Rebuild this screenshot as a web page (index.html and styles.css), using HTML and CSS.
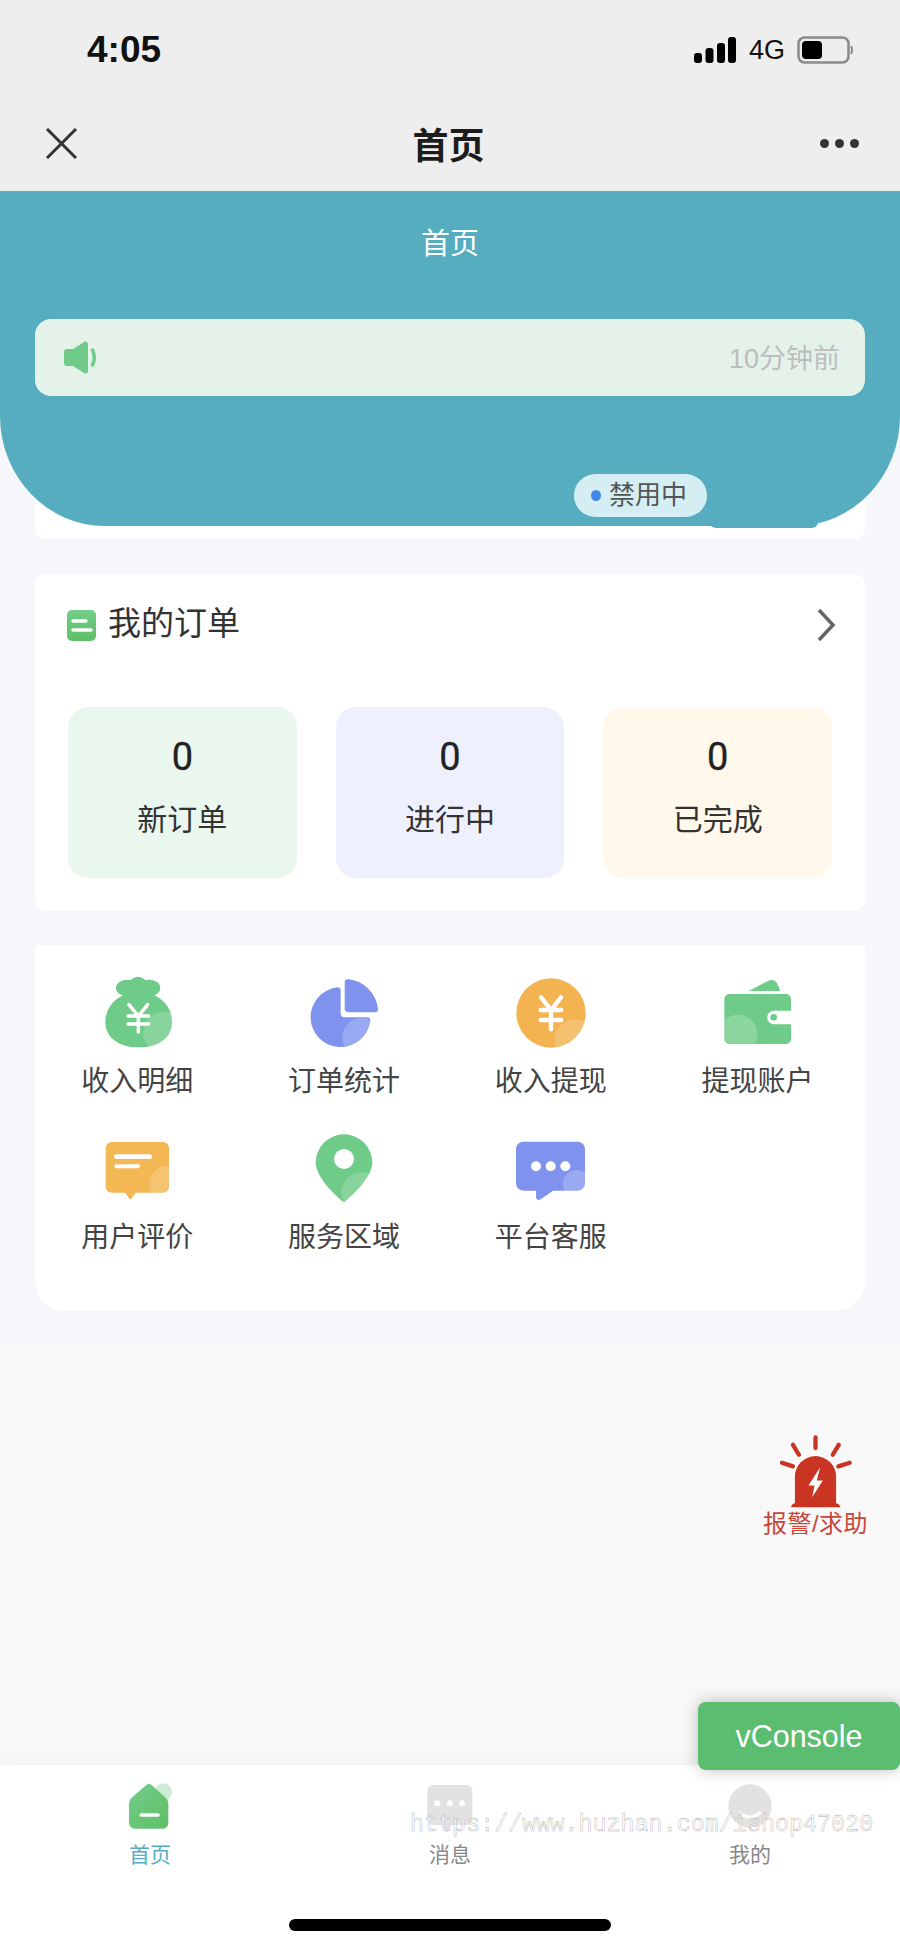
FILE: index.html
```html
<!DOCTYPE html>
<html lang="zh-CN">
<head>
    <meta charset="UTF-8">
    <meta name="viewport" content="width=device-width, initial-scale=1.0">
    <title>首页</title>
    <link rel="stylesheet" href="styles.css">
</head>
<body>
    <header class="topbar">
        <div class="status">
            <span class="time">4:05</span>
            <div class="status-icons">
                <svg class="signal" viewBox="0 0 42 26" width="42" height="26">
                    <rect x="0" y="16" width="8" height="10" rx="3"/>
                    <rect x="11.500" y="11" width="8" height="15" rx="3"/>
                    <rect x="23" y="6" width="8" height="20" rx="3"/>
                    <rect x="34" y="0" width="8" height="26" rx="3"/>
                </svg>
                <span class="network">4G</span>
                <svg class="battery" viewBox="0 0 56 28" width="56" height="28">
                    <rect x="1.500" y="1.500" width="50" height="25" rx="6" fill="none" stroke="#8a8a8a" stroke-width="2.500"/>
                    <rect x="5" y="5" width="20" height="18" rx="4" fill="#000"/>
                    <path d="M54 10 Q56 14 54 18" fill="none" stroke="#8a8a8a" stroke-width="2"/>
                </svg>
            </div>
        </div>
        <nav class="nav">
            <svg viewBox="0 0 31 31" width="31" height="31">
                <path d="M1 1 L30 30 M30 1 L1 30" stroke="#333" stroke-width="3" fill="none"/>
            </svg>
            <span class="nav-title">首页</span>
            <div class="more"><i></i><i></i><i></i></div>
        </nav>
    </header>

    <main class="content">
        <section class="panel">
            <div class="hero">
                <div class="hero-title">首页</div>
                <div class="notice">
                    <svg viewBox="0 0 33 33" width="33" height="33">
                        <path d="M3 8 H9 L21 0.500 Q24 0 24 3 V30 Q24 33 21 32.500 L9 25 H3 Q0 25 0 22 V11 Q0 8 3 8 Z" fill="#6fcb88"/>
                        <path d="M28.500 9 Q32 16.500 28.500 24" fill="none" stroke="#6fcb88" stroke-width="3.500" stroke-linecap="round"/>
                    </svg>
                    <span class="notice-time">10分钟前</span>
                </div>
                <div class="hero-nub"></div>
                <div class="badge"><i class="badge-dot"></i><span class="badge-text">禁用中</span></div>
            </div>
            <div class="profile-card"></div>

            <div class="card order-card">
                <div class="order-head">
                    <div class="order-title">
                        <svg class="order-icon" viewBox="0 0 29 31" width="29" height="31">
                            <defs>
                                <linearGradient id="titleGreen" x1="0" y1="0" x2="0" y2="1">
                                    <stop offset="0" stop-color="#72cc8a"/>
                                    <stop offset="1" stop-color="#5fc065"/>
                                </linearGradient>
                            </defs>
                            <rect width="29" height="31" rx="5" fill="url(#titleGreen)"/>
                            <path d="M6 11 H19 M6 20 H24" stroke="#fff" stroke-width="3.500" stroke-linecap="round"/>
                        </svg>
                        <span>我的订单</span>
                    </div>
                    <svg class="order-arrow" viewBox="0 0 20 34" width="20" height="34">
                        <path d="M3 2 L17 17 L3 32" fill="none" stroke="#666" stroke-width="3.500"/>
                    </svg>
                </div>
                <div class="tiles">
                    <div class="tile tile-green"><div class="tile-num">0</div><div class="tile-label">新订单</div></div>
                    <div class="tile tile-blue"><div class="tile-num">0</div><div class="tile-label">进行中</div></div>
                    <div class="tile tile-cream"><div class="tile-num">0</div><div class="tile-label">已完成</div></div>
                </div>
            </div>

            <div class="card menu-card">
                <div class="menu-grid">
                    <div class="menu-item">
                        <svg viewBox="112 36 240 240" width="80" height="80">
                            <defs><clipPath id="bagClip"><path d="M237 96 C175 96 137 140 137 185 C137 235 180 262 237 262 C295 262 337 235 337 185 C337 140 300 96 237 96 Z"/></clipPath></defs>
                            <ellipse cx="204" cy="84" rx="35" ry="25" fill="#6fcb88"/>
                            <circle cx="235" cy="77" r="27" fill="#6fcb88"/>
                            <ellipse cx="267" cy="84" rx="35" ry="25" fill="#6fcb88"/>
                            <path d="M237 96 C175 96 137 140 137 185 C137 235 180 262 237 262 C295 262 337 235 337 185 C337 140 300 96 237 96 Z" fill="#6fcb88"/>
                            <circle cx="312" cy="218" r="62" fill="#fff" opacity="0.18" clip-path="url(#bagClip)"/>
                            <path d="M208 134 L236 168 L264 134 M205 168 H267 M205 192 H267 M236 168 V216" fill="none" stroke="#fff" stroke-width="10.500" stroke-linecap="round"/>
                        </svg>
                        <span>收入明细</span>
                    </div>
                    <div class="menu-item">
                        <svg viewBox="733 36 240 240" width="80" height="80">
                            <defs><clipPath id="pieClip"><path d="M843 92 V160 Q843 172 855 172 H922 Q933 172 932 183 A90 90 0 1 1 832 82 Q843 81 843 92 Z"/></clipPath></defs>
                            <path d="M843 92 V160 Q843 172 855 172 H922 Q933 172 932 183 A90 90 0 1 1 832 82 Q843 81 843 92 Z" fill="#7f93ee"/>
                            <path d="M855 68 Q855 57 866 58 A100 100 0 0 1 955 146 Q956 157 945 157 H868 Q855 157 855 145 Z" fill="#7f93ee"/>
                            <circle cx="906" cy="232" r="58" fill="#fff" opacity="0.2" clip-path="url(#pieClip)"/>
                        </svg>
                        <span>订单统计</span>
                    </div>
                    <div class="menu-item">
                        <svg viewBox="153 36 240 240" width="80" height="80">
                            <defs><clipPath id="coinClip"><circle cx="273" cy="159" r="104"/></clipPath></defs>
                            <circle cx="273" cy="159" r="104" fill="#f3b350"/>
                            <circle cx="345" cy="240" r="62" fill="#fff" opacity="0.18" clip-path="url(#coinClip)"/>
                            <path d="M243 112 L273 150 L303 112 M242 150 H304 M242 180 H304 M273 150 V208" fill="none" stroke="#fff" stroke-width="13" stroke-linecap="round"/>
                        </svg>
                        <span>收入提现</span>
                    </div>
                    <div class="menu-item">
                        <svg viewBox="771 36 240 240" width="80" height="80">
                            <defs><clipPath id="walletClip"><rect x="793" y="102" width="200" height="150" rx="15"/></clipPath></defs>
                            <path d="M866 93 L925 62 Q943 55 951 70 L961 93 Z" fill="#6fcb88"/>
                            <rect x="793" y="102" width="200" height="150" rx="15" fill="#6fcb88"/>
                            <circle cx="834" cy="222" r="58" fill="#fff" opacity="0.2" clip-path="url(#walletClip)"/>
                            <path d="M993 152 H942 A20 20 0 0 0 942 193 H993 Z" fill="#fff"/>
                            <circle cx="941" cy="172" r="10" fill="#6fcb88"/>
                        </svg>
                        <span>提现账户</span>
                    </div>
                    <div class="menu-item">
                        <svg viewBox="112 504 240 240" width="80" height="80">
                            <defs><clipPath id="noteClip"><rect x="138" y="546" width="190" height="152" rx="18"/></clipPath></defs>
                            <rect x="138" y="546" width="190" height="152" rx="18" fill="#f3b854"/>
                            <path d="M195 696 L209 716 Q212 719 215 716 L230 696 Z" fill="#f3b854"/>
                            <circle cx="325" cy="672" r="55" fill="#fff" opacity="0.18" clip-path="url(#noteClip)"/>
                            <path d="M170 590 H270" stroke="#fff" stroke-width="14" stroke-linecap="round"/>
                            <path d="M170 619 H235" stroke="#fff" stroke-width="12" stroke-linecap="round"/>
                        </svg>
                        <span>用户评价</span>
                    </div>
                    <div class="menu-item">
                        <svg viewBox="733 504 240 240" width="80" height="80">
                            <defs><clipPath id="pinClip"><path d="M853 523 A85 85 0 0 1 938 605 C938 650 885 700 853 727 C820 700 768 650 768 605 A85 85 0 0 1 853 523 Z"/></clipPath></defs>
                            <path d="M853 523 A85 85 0 0 1 938 605 C938 650 885 700 853 727 C820 700 768 650 768 605 A85 85 0 0 1 853 523 Z" fill="#6fcb88"/>
                            <circle cx="905" cy="697" r="60" fill="#fff" opacity="0.18" clip-path="url(#pinClip)"/>
                            <circle cx="853" cy="597" r="30" fill="#fff"/>
                        </svg>
                        <span>服务区域</span>
                    </div>
                    <div class="menu-item">
                        <svg viewBox="153 504 240 240" width="80" height="80">
                            <defs><clipPath id="chatClip"><rect x="168" y="545" width="207" height="147" rx="22"/></clipPath></defs>
                            <rect x="168" y="545" width="207" height="147" rx="22" fill="#7f93ee"/>
                            <path d="M228 688 V712 Q230 724 242 718 L282 690 Z" fill="#7f93ee"/>
                            <circle cx="350" cy="672" r="42" fill="#fff" opacity="0.2" clip-path="url(#chatClip)"/>
                            <circle cx="228" cy="619" r="15" fill="#fff"/>
                            <circle cx="272" cy="619" r="15" fill="#fff"/>
                            <circle cx="316" cy="619" r="15" fill="#fff"/>
                        </svg>
                        <span>平台客服</span>
                    </div>
                </div>
            </div>
        </section>

        <div class="alarm">
            <svg viewBox="355 100 226 222" width="75" height="74">
                <path d="M406 308 V228 A62 62 0 0 1 530 228 V308 Q541 310 543 320 H394 Q396 310 406 308 Z" fill="#c93522"/>
                <path d="M482 200 L447 255 L465 255 L458 290 L490 240 L472 240 Z" fill="#fff"/>
                <path d="M468 110 V142 M400 132 L418 162 M538 132 L520 162 M367 186 L400 197 M571 186 L537 197" fill="none" stroke="#c93522" stroke-width="13" stroke-linecap="round"/>
            </svg>
            <span>报警/求助</span>
        </div>
    </main>

    <footer class="tabbar">
        <div class="tabs">
            <div class="tab tab-active">
                <svg viewBox="60 30 180 180" width="60" height="60">
                    <defs>
                        <linearGradient id="homeGreen" x1="0" y1="0" x2="1" y2="1">
                            <stop offset="0" stop-color="#72cc8a"/>
                            <stop offset="1" stop-color="#5fc065"/>
                        </linearGradient>
                    </defs>
                    <circle cx="190" cy="66" r="26" fill="#cdeed5"/>
                    <path d="M138 46 Q147 38 156 46 L198 84 Q205 90 205 100 V157 Q205 176 186 176 H106 Q87 176 87 157 V100 Q87 90 94 84 Z" fill="url(#homeGreen)"/>
                    <path d="M124 135 H174" stroke="#fff" stroke-width="11" stroke-linecap="round"/>
                </svg>
                <span>首页</span>
            </div>
            <div class="tab">
                <svg viewBox="60 30 180 180" width="60" height="60">
                    <rect x="82" y="45" width="135" height="120" rx="18" fill="#e2e2e2"/>
                    <path d="M125 160 L140 188 L160 160 Z" fill="#e2e2e2"/>
                    <circle cx="112" cy="100" r="9" fill="#fff"/>
                    <circle cx="150" cy="100" r="9" fill="#fff"/>
                    <circle cx="186" cy="100" r="9" fill="#fff"/>
                </svg>
                <span>消息</span>
            </div>
            <div class="tab">
                <svg viewBox="960 30 180 180" width="60" height="60">
                    <circle cx="1050" cy="108" r="65" fill="#e2e2e2"/>
                    <path d="M1020 128 Q1050 155 1080 128" fill="none" stroke="#fff" stroke-width="9" stroke-linecap="round"/>
                </svg>
                <span>我的</span>
            </div>
        </div>
        <div class="home-bar"></div>
        <div class="watermark">https://www.huzhan.com/ishop47020</div>
    </footer>

    <div class="vconsole">vConsole</div>
</body>
</html>
```

FILE: styles.css
```css
/* Global Styles */
* {
    margin: 0;
    padding: 0;
    box-sizing: border-box;
    font-family: "Liberation Sans", "Noto Sans CJK SC", sans-serif;
}

body {
    position: relative;
    display: flex;
    flex-direction: column;
    width: 900px;
    height: 1948px;
    overflow: hidden;
    background: #f8f8f8;
    color: #333;
}

svg {
    display: block;
    flex: none;
}

/* Top bars */
.topbar {
    height: 191px;
    background: #eeeeee;
}

.status {
    display: flex;
    justify-content: space-between;
    align-items: center;
    height: 100px;
    padding: 0 47px 0 87px;
}

.time {
    font-size: 37px;
    font-weight: bold;
    color: #111;
}

.status-icons {
    display: flex;
    align-items: center;
}

.network {
    margin: 0 12px 0 13px;
    font-size: 27px;
    color: #111;
}

.nav {
    display: flex;
    justify-content: space-between;
    align-items: center;
    height: 91px;
    padding: 0 41px 5px 46px;
}

.nav-title {
    font-size: 36px;
    font-weight: bold;
    color: #1c1c1c;
}

.more {
    display: flex;
    gap: 6px;
}

.more i {
    width: 9px;
    height: 9px;
    border-radius: 50%;
    background: #333;
}

/* Page */
.content {
    position: relative;
    flex: 1;
}

.panel {
    height: 1151px;
    background: #f5f7fb;
}

.hero {
    position: relative;
    z-index: 1;
    height: 335px;
    padding-top: 31px;
    background: #55adbf;
    border-radius: 0 0 105px 105px / 0 0 110px 110px;
}

.hero-title {
    height: 44px;
    line-height: 44px;
    font-size: 29px;
    color: #fff;
    text-align: center;
}

.notice {
    display: flex;
    justify-content: space-between;
    align-items: center;
    height: 77px;
    margin: 53px 35px 0;
    padding: 0 25px 0 29px;
    background: #e4f2e9;
    border-radius: 16px;
}

.notice-time {
    padding-bottom: 2px;
    font-size: 27px;
    color: #bdbdbd;
}

.hero-nub {
    position: absolute;
    left: 710px;
    bottom: -2px;
    width: 108px;
    height: 12px;
    background: #55adbf;
    border-radius: 0 0 6px 6px;
}

.badge {
    position: absolute;
    left: 574px;
    top: 283px;
    display: flex;
    align-items: center;
    gap: 8px;
    width: 133px;
    height: 43px;
    padding-left: 17px;
    background: #d5eef3;
    border-radius: 22px;
    font-size: 26px;
    color: #555;
}

.badge-text {
    padding-bottom: 7px;
}

.badge-dot {
    width: 10px;
    height: 11px;
    border-radius: 50%;
    background: #3f87e8;
}

.card {
    margin-left: 35px;
    margin-right: 35px;
    background: #fff;
}

.profile-card {
    height: 100px;
    margin: -87px 35px 0;
    background: #fff;
    border-radius: 10px;
}

/* Orders */
.order-card {
    height: 337px;
    margin-top: 35px;
    padding: 26px 33px 0 32px;
    border-radius: 10px;
}

.order-head {
    display: flex;
    justify-content: space-between;
    align-items: center;
    height: 42px;
}

.order-title {
    display: flex;
    align-items: center;
    gap: 12px;
    font-size: 33px;
    color: #333;
}

.order-icon {
    margin-top: 8px;
}

.order-arrow {
    margin: 8px -4px 0 0;
}

.tiles {
    display: grid;
    grid-template-columns: repeat(3, 1fr);
    gap: 39px;
    margin: 65px 0 0 1px;
}

.tile {
    height: 171px;
    padding-top: 28px;
    border-radius: 20px;
    text-align: center;
}

.tile-green { background: #e9f7ef; }
.tile-blue { background: #eef1fd; }
.tile-cream { background: #fff8eb; }

.tile-num {
    height: 44px;
    line-height: 44px;
    font-family: Roboto, sans-serif;
    font-size: 38px;
    color: #222;
    -webkit-text-stroke: 0.3px #222;
}

.tile-label {
    height: 42px;
    margin-top: 20px;
    line-height: 42px;
    font-size: 30px;
    color: #333;
}

/* Menu */
.menu-card {
    height: 366px;
    margin-top: 34px;
    padding-top: 27px;
    border-radius: 4px 4px 30px 30px;
}

.menu-grid {
    display: grid;
    grid-template-columns: repeat(4, 206.7px);
    row-gap: 26px;
    margin-left: -1px;
}

.menu-item {
    display: flex;
    flex-direction: column;
    align-items: center;
    gap: 10px;
    height: 130px;
    font-size: 28px;
    line-height: 40px;
    color: #444;
}

/* Alarm button */
.alarm {
    position: absolute;
    right: 32px;
    top: 1243px;
    display: flex;
    flex-direction: column;
    align-items: center;
    width: 105px;
    font-size: 24px;
    line-height: 32px;
    letter-spacing: 0.5px;
    color: #c9463b;
    white-space: nowrap;
}

/* Tab bar */
.tabbar {
    position: relative;
    height: 183px;
    padding-top: 15px;
    background: #fff;
    box-shadow: 0 -4px 12px rgba(0, 0, 0, 0.03);
}

.tabs {
    display: grid;
    grid-template-columns: repeat(3, 300px);
}

.tab {
    display: flex;
    flex-direction: column;
    align-items: center;
    height: 90px;
    font-size: 21px;
    line-height: 30px;
    color: #888;
}

.tab-active {
    color: #55adbf;
}

.home-bar {
    width: 322px;
    height: 12px;
    margin: 49px auto 0;
    background: #000;
    border-radius: 6px;
}

.watermark {
    position: absolute;
    left: 410px;
    top: 45px;
    font-family: "Liberation Mono", monospace;
    font-size: 23.400px;
    line-height: 30px;
    white-space: nowrap;
    color: rgba(255, 255, 255, 0.6);
    -webkit-text-stroke: 0.4px #aaa;
}

.vconsole {
    position: absolute;
    right: 0;
    top: 1702px;
    width: 202px;
    height: 68px;
    line-height: 68px;
    text-align: center;
    background: #5bbd70;
    border-radius: 8px;
    box-shadow: 0 0 16px rgba(0, 0, 0, 0.25);
    font-size: 30.500px;
    color: #fff;
}
```
